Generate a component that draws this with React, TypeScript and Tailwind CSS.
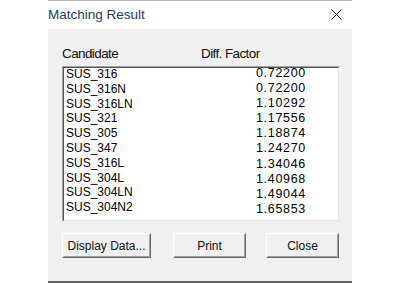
import React from 'react';

const rows = [
  { name: 'SUS_316', value: '0.72200' },
  { name: 'SUS_316N', value: '0.72200' },
  { name: 'SUS_316LN', value: '1.10292' },
  { name: 'SUS_321', value: '1.17556' },
  { name: 'SUS_305', value: '1.18874' },
  { name: 'SUS_347', value: '1.24270' },
  { name: 'SUS_316L', value: '1.34046' },
  { name: 'SUS_304L', value: '1.40968' },
  { name: 'SUS_304LN', value: '1.49044' },
  { name: 'SUS_304N2', value: '1.65853' },
];

function WinButton({ label, width }: { label: string; width: string }) {
  return (
    <div className={`${width} h-[25px] border border-t-white border-l-white border-r-[#696969] border-b-[#696969] bg-[#f0f0f0]`}>
      <div className="h-full w-full border border-t-[#f0f0f0] border-l-[#f0f0f0] border-r-[#a0a0a0] border-b-[#a0a0a0] flex items-center justify-center text-[12px] leading-[14px] text-[#111]">
        {label}
      </div>
    </div>
  );
}

export default function App() {
  return (
    <div className="w-[400px] h-[284px] bg-white overflow-hidden" style={{ fontFamily: '"Liberation Sans", Arial, sans-serif' }}>
      <div className="ml-[48px] w-[304px]">
        {/* window edge above */}
        <div className="h-px bg-[#b9b9b9]" />

        {/* title bar */}
        <div className="h-[28px] bg-white flex items-start justify-between pt-[6px]">
          <span className="text-[13.5px] leading-[16px] text-[#1d3a63]">Matching Result</span>
          <svg width="11" height="11" viewBox="0 0 11 11" className="mt-[2px] mr-[10px]">
            <path d="M0.5 0.5 L10.5 10.5 M10.5 0.5 L0.5 10.5" stroke="#111" strokeWidth="1" fill="none" />
          </svg>
        </div>

        {/* dialog body */}
        <div className="h-[252px] bg-[#f0f0f0] pt-[17px] pl-[14px] pr-[12px]">
          <div className="flex h-[16px] text-[13.5px] leading-[16px] tracking-[-0.6px] text-[#111]">
            <span className="w-[139px]">Candidate</span>
            <span>Diff. Factor</span>
          </div>

          <div className="mt-[4px] h-[156px] border border-t-[#a0a0a0] border-l-[#a0a0a0] border-r-[#f0f0f0] border-b-[#f0f0f0]">
            <div className="h-full border border-t-[#555] border-l-[#555] border-r-[#e3e3e3] border-b-[#e3e3e3] bg-white flex text-[12px] text-black">
              <div className="flex-1 pl-[2px] -mt-px">
                {rows.map((r) => (
                  <div key={r.name} className="leading-[14.8px]">{r.name}</div>
                ))}
              </div>
              <div className="w-[60px] mr-[32px] text-right -mt-[2px] text-[12.5px]">
                {rows.map((r) => (
                  <div key={r.name} className="leading-[15.1px] tracking-[0.7px]">{r.value}</div>
                ))}
              </div>
            </div>
          </div>

          <div className="mt-[11px] flex">
            <WinButton label="Display Data..." width="w-[89px]" />
            <div className="ml-[22px]">
              <WinButton label="Print" width="w-[73px]" />
            </div>
            <div className="ml-[20px]">
              <WinButton label="Close" width="w-[73px]" />
            </div>
          </div>
        </div>

        {/* bottom edge */}
        <div className="h-[2px] bg-[#5f5f5f]" />
        <div className="flex justify-end">
          <div className="w-[51px] mt-px border-t border-dotted border-[#666]" />
        </div>
      </div>
    </div>
  );
}
